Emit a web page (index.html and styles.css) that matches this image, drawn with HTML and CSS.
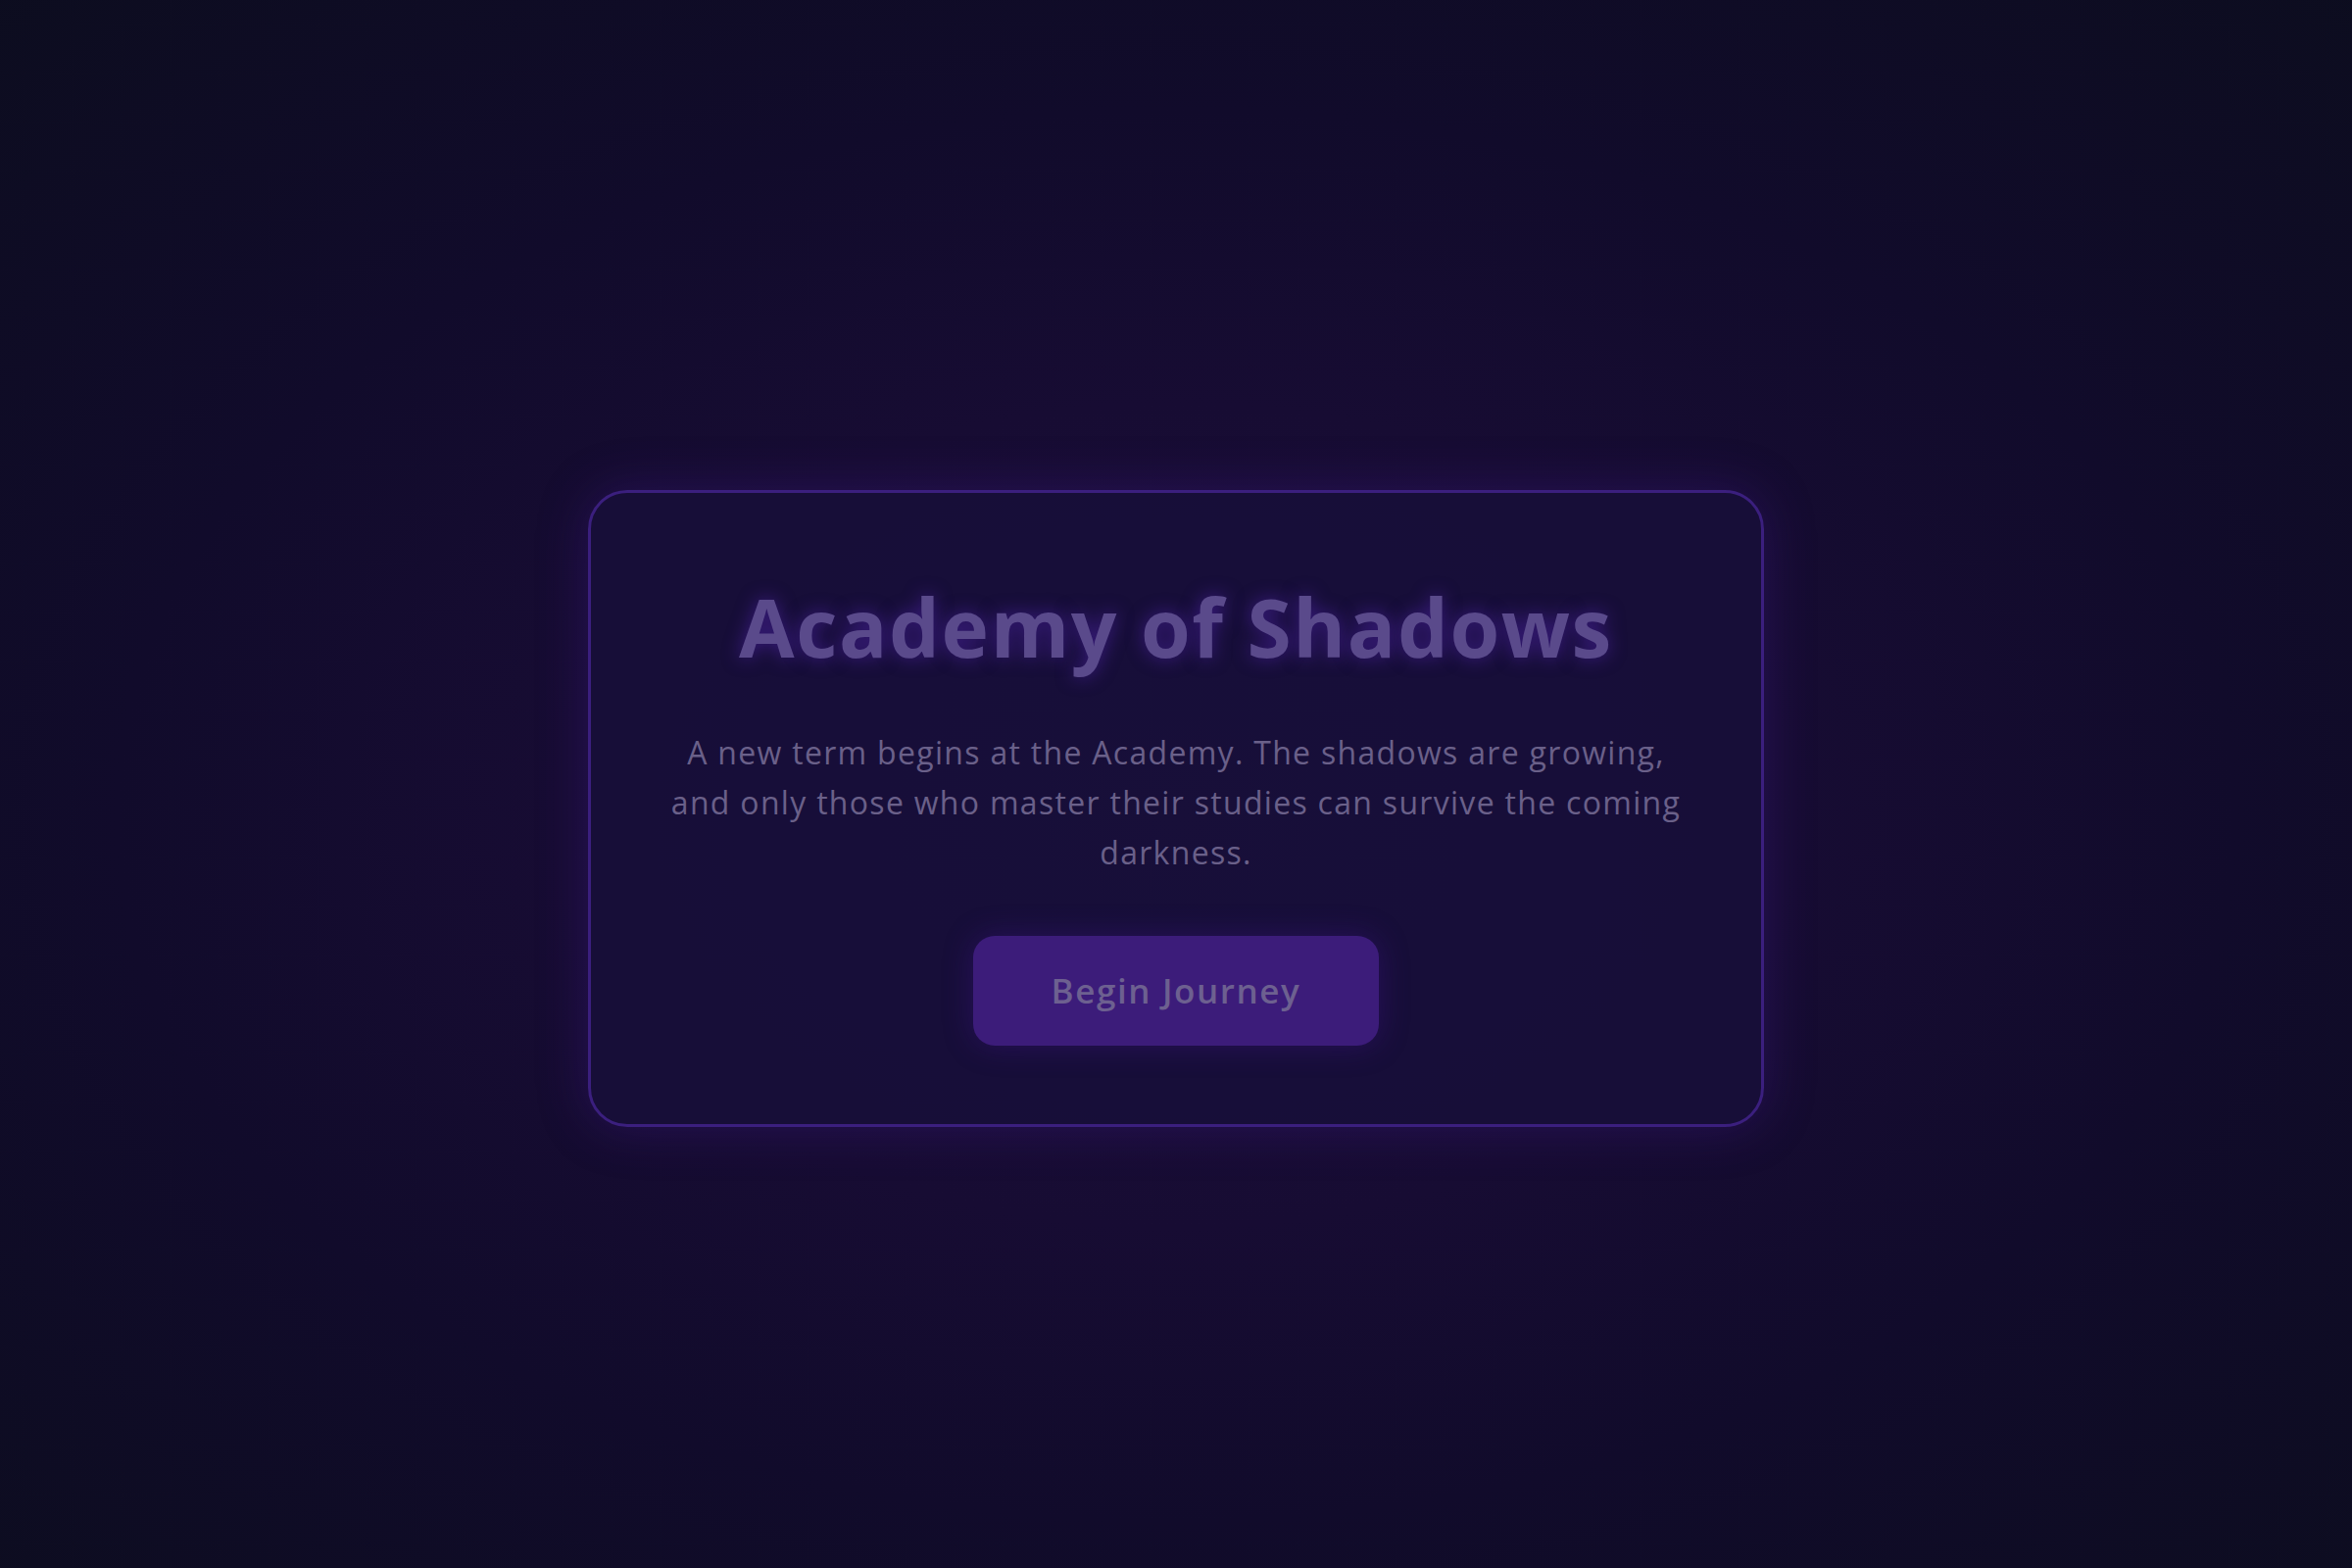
FILE: index.html
```html
<!DOCTYPE html>
<html lang="en">
<head>
<meta charset="utf-8">
<title>Academy of Shadows</title>
<link rel="stylesheet" href="styles.css">
</head>
<body>
<main class="stage">
  <section class="card">
    <h1 class="title">Academy of Shadows</h1>
    <p class="lead">A new term begins at the Academy. The shadows are growing, and only those who master their studies can survive the coming darkness.</p>
    <button class="cta" type="button">Begin Journey</button>
  </section>
</main>
</body>
</html>
```

FILE: styles.css
```css
* { box-sizing: border-box; }
html, body { margin: 0; height: 100%; }
body {
  font-family: "Open Sans", "Liberation Sans", sans-serif;
  background: radial-gradient(ellipse 75% 75% at 50% 52%, #1b0e3a 0%, #170c33 35%, #110b2b 60%, #0c0d1e 100%);
  min-height: 100vh;
}
.stage {
  min-height: 100vh;
  display: flex;
  align-items: center;
  justify-content: center;
  padding-top: 50px;
}
.card {
  width: 1200px;
  padding: 88px 80px 80px;
  border: 3px solid #3b1f7e;
  border-radius: 40px;
  background: rgba(24, 15, 58, 0.85);
  box-shadow: 0 0 50px rgba(70, 25, 150, 0.35);
  display: flex;
  flex-direction: column;
  align-items: center;
  text-align: center;
}
.title {
  margin: 0;
  font-size: 82px;
  line-height: 96px;
  font-weight: 700;
  color: #5a4a8b;
  letter-spacing: 1.6px;
  text-shadow: 0 0 18px rgba(90, 40, 190, 0.55);
}
.lead {
  margin: 55px 0 0;
  font-size: 32px;
  line-height: 51px;
  color: #6a6089;
  letter-spacing: 1.3px;
  max-width: 1040px;
}
.cta {
  margin-top: 60px;
  font-family: inherit;
  font-size: 35px;
  font-weight: 600;
  line-height: 48px;
  color: #6d6090;
  background: #3c1c7a;
  border: none;
  border-radius: 22px;
  padding: 32px 80px;
  letter-spacing: 1.6px;
  box-shadow: 0 0 30px rgba(60, 20, 130, 0.45);
  cursor: pointer;
}
```
